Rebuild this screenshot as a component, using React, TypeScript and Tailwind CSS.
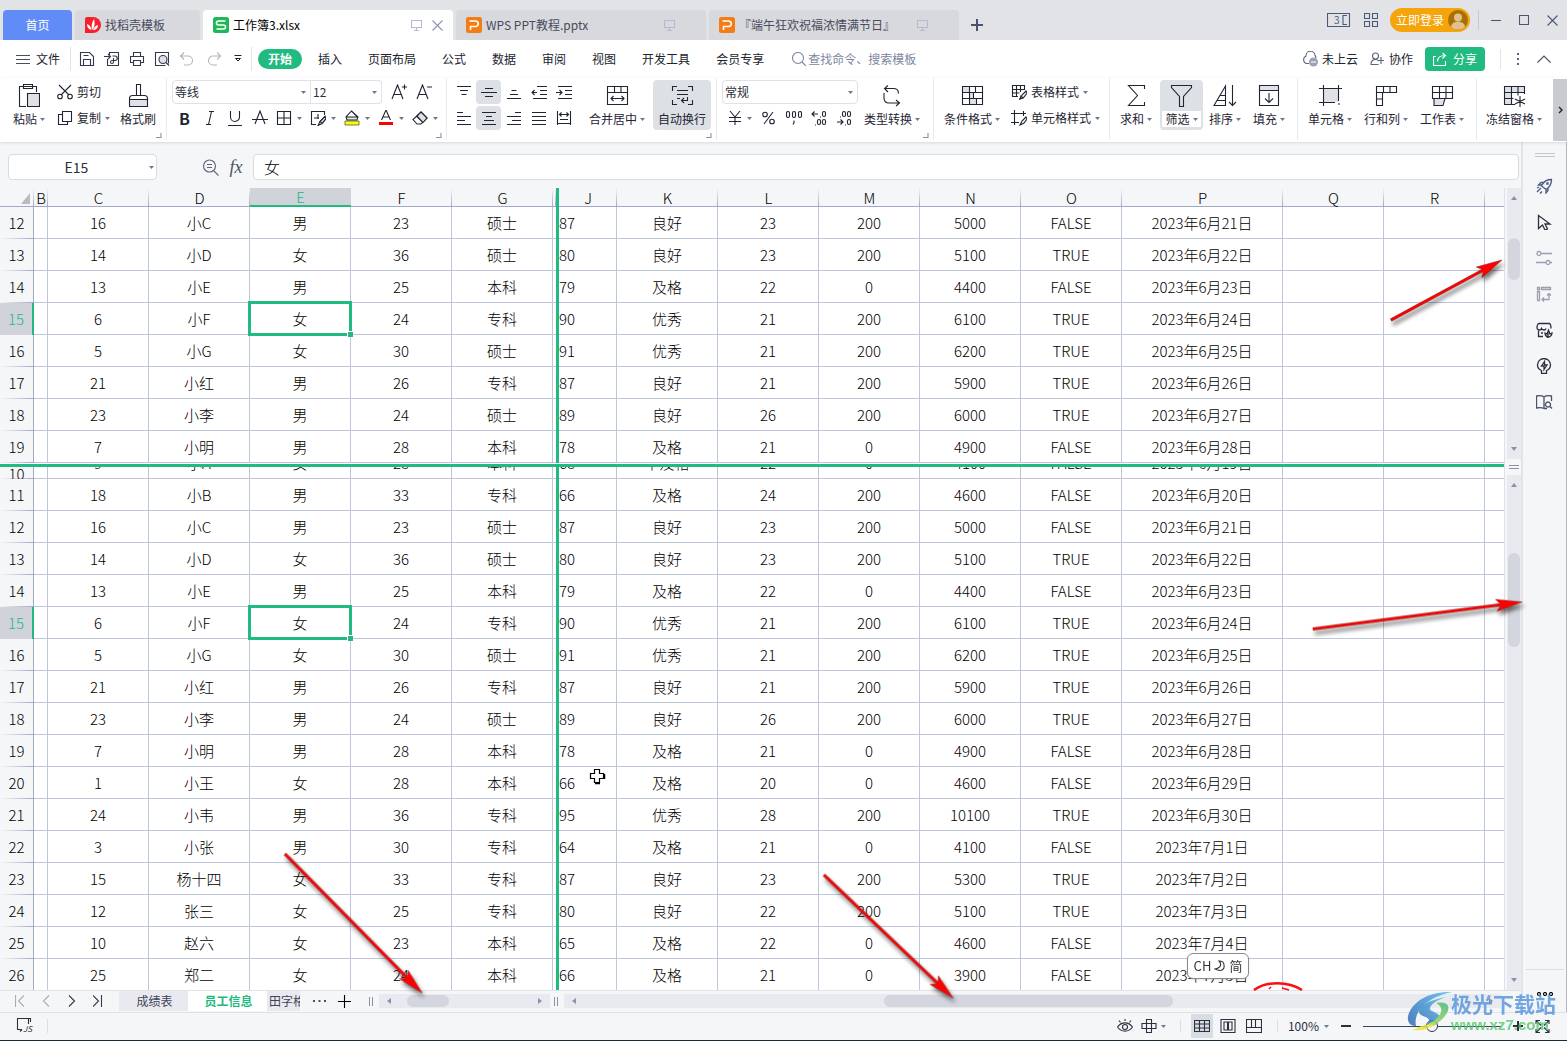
import React from 'react';

type IconProps = {
    d: string;
    w?: number;
    h?: number;
    fill?: string;
    className?: string;
    sw?: number;
    children?: React.ReactNode;
};

// Line icon drawn on its own pixel grid. `fill` is a second path shown as a pale area.
const Icon: React.FC<IconProps> = ({ d, w = 16, h = w, fill, className = '', sw = 1.1, children }) => (
    <svg width={w} height={h} viewBox={`0 0 ${w} ${h}`} fill="none" stroke="currentColor" strokeWidth={sw} className={`shrink-0 ${className}`} aria-hidden="true">
        {fill && <path d={fill} fill="#dfe1e6" stroke="none" />}
        <path d={d} />
        {children}
    </svg>
);

const Caret: React.FC<{ className?: string }> = ({ className = '' }) => (
    <svg width="5" height="3" viewBox="0 0 5 3" className={`shrink-0 text-[#6f7891] ${className}`} aria-hidden="true">
        <path d="M0 0h5L2.5 3z" fill="currentColor" />
    </svg>
);

const icons = {
    save: 'M1.5 1.5h9l4 4v9h-13zM4.5 14.5v-6h7v6M4.5 4.5h5',
    pdf: 'M5.500 4V1.500h9v13h-11V8M0 5.500h6.500M4 3l2.500 2.500L4 8M8.500 5h2.500a2 2 0 0 1 0 4.500h-3a1.500 1.500 0 1 0 1.500 1.500V7',
    print: 'M4.5 5.500v-4h7v4M4.500 11.500h-3v-6h13v6h-3M4.500 9.500h7v5h-7z',
    preview: 'M11.500 14.500h-10v-13h13v11M12 11.500l3 3',
    undo: 'M5 1.500L1.500 5L5 8.500M1.500 5h7.500a4.500 4.500 0 0 1 0 9H5',
    redo: 'M11 1.500L14.500 5L11 8.500M14.500 5H7a4.500 4.500 0 0 0 0 9h4',
    top: 'M1 2.500h14M4 6.500h8M5.500 10.500h5',
    middle: 'M4 4.500h8M0 8.500h16M4 12.500h8',
    bottom: 'M5.500 6.500h5M4 10.500h8M1 14.500h14',
    outdent: 'M6 2.500h10M9 6.500h7M9 10.500h7M2 14.500h14M1 8.500h5M3.500 6L1 8.500L3.500 11',
    indent: 'M2 2.500h14M9 6.500h7M9 10.500h7M2 14.500h14M0 8.500h6M3.500 6L6 8.500L3.500 11',
    left: 'M1 2.500h6M1 6.500h14M1 10.500h8M1 14.500h14',
    center: 'M1 2.500h14M5 6.500h6M3 10.500h10M1 14.500h14',
    right: 'M9 2.500h6M1 6.500h14M6 10.500h9M1 14.500h14',
    justify: 'M1 2.500h14M1 6.500h14M1 10.500h14M1 14.500h14',
    spread: 'M1.500 1v14M14.500 1v14M4 4.500h8M5.500 2.500L3.500 4.500L5.500 6.500M10.500 2.500L12.500 4.500L10.500 6.500M4 9.500h8M1 13.500h14',
};

const WpsLogo: React.FC<{ kind: 'sheet' | 'slide' | 'docer' }> = ({ kind }) => {
    if (kind === 'docer') {
        return (
            <svg width="16" height="16" viewBox="0 0 16 16" className="shrink-0" aria-hidden="true">
                <path d="M0 2a2 2 0 0 1 2-2h6a8 8 0 0 1 0 16H0z" fill="#f5222d" />
                <path d="M7 13C6 9 7 5 9 2c1 4 1 8-2 11zM6.500 13C3 12 2 9.500 2 7c3 1 4 3 4.500 6zM8 13c1-3 3-4.500 5-5 0 3-2 5-5 5z" fill="#fff" />
            </svg>
        );
    }
    const sheet = kind === 'sheet';
    return (
        <svg width="16" height="16" viewBox="0 0 16 16" className="shrink-0" aria-hidden="true">
            <rect width="16" height="16" rx="2.500" fill={sheet ? '#1fb858' : '#f57c14'} />
            <path d={sheet ? 'M12.500 4H5.500a1.700 1.700 0 0 0 0 4h5a1.700 1.700 0 0 1 0 4H3.500' : 'M4.500 13V9.500H10a2.800 2.800 0 0 0 0-5.500H3.500'} stroke="#fff" strokeWidth="1.600" fill="none" />
        </svg>
    );
};

const Monitor = () => <Icon d="M.5 1.500h10v7h-10zM5.500 8.500v3M3 11.500h5" w={11} h={12} className="text-[#b5bad2]" />;

const TitleBar = () => (
    <header className="flex h-10 items-end bg-[#e2e3e7] pl-[3px] pr-[9px]">
        <button className="h-[30px] w-[69px] shrink-0 rounded-t bg-[#618cf8] text-white">首页</button>
        <button className="ml-[3px] flex h-[30px] w-[125px] shrink-0 items-center gap-1 rounded-t bg-[#d8d9dd] pl-[10px] text-[#474b5c]">
            <WpsLogo kind="docer" />
            找稻壳模板
        </button>
        <div className="ml-[3px] flex h-[30px] w-[250px] shrink-0 items-center gap-1 rounded-t bg-white pl-[10px] pr-[10px] text-black">
            <WpsLogo kind="sheet" />
            <span className="flex-1">工作簿3.xlsx</span>
            <Monitor />
            <button aria-label="关闭标签" className="ml-[6px]">
                <Icon d="M.5.5l10 10M10.500.5l-10 10" w={11} className="text-[#8d94b0]" />
            </button>
        </div>
        <div className="ml-[3px] flex h-[30px] w-[250px] shrink-0 items-center gap-1 rounded-t bg-[#d8d9dd] pl-[10px] pr-[31px] text-[#474b5c]">
            <WpsLogo kind="slide" />
            <span className="flex-1">WPS PPT教程.pptx</span>
            <Monitor />
        </div>
        <div className="ml-[3px] flex h-[30px] w-[250px] shrink-0 items-center gap-1 rounded-t bg-[#d8d9dd] pl-[10px] pr-[31px] text-[#474b5c]">
            <WpsLogo kind="slide" />
            <span className="flex-1 whitespace-nowrap">『端午狂欢祝福浓情满节日』</span>
            <Monitor />
        </div>
        <button aria-label="新建标签" className="ml-3 flex h-[30px] items-center">
            <Icon d="M6 0v12M0 6h12" w={12} sw={2} className="text-[#4a536f]" />
        </button>
        <div className="flex h-10 flex-1 items-center justify-end text-[#4a5878]">
            <button aria-label="窗口数">
                <Icon d="M.5.5h22v13h-22zM20 2.500h-4v9h4" w={24} h={14}>
                    <text x="7" y="11" fontSize="10" fill="currentColor" stroke="none">3</text>
                </Icon>
            </button>
            <button aria-label="应用" className="ml-[13px]">
                <Icon d="M.5.5h5v5h-5zM8.500.5h5v5h-5zM.5 8.500h5v5h-5zM8.500 8.500h5v5h-5z" w={14} />
            </button>
            <button className="ml-3 flex h-6 items-center gap-1 rounded-full bg-[#f5a40c] pl-[6px] pr-[2px] text-white">
                立即登录
                <svg width="20" height="20" viewBox="0 0 20 20" aria-hidden="true">
                    <circle cx="10" cy="10" r="10" fill="#a96f05" />
                    <circle cx="10" cy="7.500" r="4" fill="#e0c08b" />
                    <path d="M3 17a7 5.500 0 0 1 14 0a10 10 0 0 1-14 0z" fill="#e0c08b" />
                </svg>
            </button>
            <span className="ml-2 h-5 w-px bg-[#c6c8d0]" />
            <button aria-label="最小化" className="ml-3">
                <Icon d="M0 5.500h10" w={10} />
            </button>
            <button aria-label="最大化" className="ml-[18px]">
                <Icon d="M.5.5h9v9h-9z" w={10} />
            </button>
            <button aria-label="关闭" className="ml-[18px]">
                <Icon d="M.5.5l10 10M10.500.5l-10 10" w={11} />
            </button>
        </div>
    </header>
);

const menus = ['插入', '页面布局', '公式', '数据', '审阅', '视图', '开发工具', '会员专享'];

const MenuBar = () => (
    <nav className="flex h-[38px] items-center bg-white pl-4 pr-4 text-[#20242e]">
        <button className="flex items-center gap-[6px]">
            <Icon d="M0 1.500h14M0 5.500h14M0 9.500h14" w={14} h={11} className="text-[#4a4f5e]" />
            文件
        </button>
        <span className="ml-[10px] h-6 w-px bg-[#e2e3e8]" />
        <div className="ml-2 flex items-center gap-[9px] text-[#333a4b]">
            <button aria-label="保存"><Icon d={icons.save} /></button>
            <button aria-label="输出为PDF"><Icon d={icons.pdf} /></button>
            <button aria-label="打印"><Icon d={icons.print} /></button>
            <button aria-label="打印预览"><Icon d={icons.preview}><circle cx="9" cy="8.500" r="4" fill="#dfe1e6" /></Icon></button>
            <button aria-label="撤销" className="text-[#b3b5bb]"><Icon d={icons.undo} /></button>
            <button aria-label="恢复" className="ml-[2px] text-[#b3b5bb]"><Icon d={icons.redo} /></button>
        </div>
        <button aria-label="更多快捷命令" className="ml-3">
            <Icon d="M.5 .5h7M1.500 3.500h5L4 6z" w={8} h={8} sw={1} />
        </button>
        <span className="ml-[9px] h-6 w-px bg-[#e2e3e8]" />
        <button className="ml-[6px] h-5 w-11 rounded-full bg-[#21ba80] font-bold text-white">开始</button>
        <div className="ml-4 flex gap-[26px]">
            {menus.map(m => (
                <button key={m} className="whitespace-nowrap">{m}</button>
            ))}
        </div>
        <label className="ml-7 flex items-center gap-[2px] text-[#7d86a0]">
            <Icon d="M10 10l4 4" w={14}><circle cx="6" cy="6" r="5.500" /></Icon>
            <input aria-label="查找命令、搜索模板" placeholder="查找命令、搜索模板" className="w-32 bg-transparent outline-none placeholder:text-[#7d86a0]" />
        </label>
        <div className="flex flex-1 items-center justify-end">
            <button className="flex items-center gap-1">
                <Icon d="M7 12.500H4.500a4 4 0 0 1-.5-7.500a4.500 4.500 0 0 1 9-.5c.5.500 1 1.500 1 2.500" w={16} className="text-[#5b647d]">
                    <circle cx="11.500" cy="11" r="4.500" fill="#9ca1b8" stroke="none" />
                    <path d="M9 11h5" stroke="#fff" />
                </Icon>
                未上云
            </button>
            <button className="ml-3 flex items-center gap-[5px]">
                <Icon d="M1 12.500c0-4 2-5 4.500-5c1.500 0 2.500.5 3 1.500M.5 12.500h8M11 5v7M7.500 8.500h7" w={14} className="text-[#5b647d]">
                    <circle cx="5.500" cy="4" r="3" />
                </Icon>
                协作
            </button>
            <button className="ml-3 flex h-6 w-[60px] items-center justify-center gap-[6px] rounded bg-[#21ba80] text-white">
                <Icon d="M3 4.500H.5v9h12V9M4.500 9.500c0-4 3-6 8-6M9.500 1L12.500 3.500L9.500 6.500" w={14} />
                分享
            </button>
            <span className="ml-[15px] h-5 w-px bg-[#e2e3e8]" />
            <button aria-label="更多" className="ml-4">
                <svg width="2" height="12" viewBox="0 0 2 12" fill="#5b647d" aria-hidden="true"><path d="M0 0h2v2H0zM0 5h2v2H0zM0 10h2v2H0z" /></svg>
            </button>
            <button aria-label="收起功能区" className="ml-[18px]">
                <Icon d="M.5 7.500L7 1l6.500 6.500" w={14} h={8} className="text-[#4a4f5e]" />
            </button>
        </div>
    </nav>
);

const Group: React.FC<{ className?: string; corner?: boolean; children: React.ReactNode }> = ({ className = '', corner, children }) => (
    <div className={`relative flex h-[62px] shrink-0 border-r border-[#e9eaee] pt-[2px] ${className}`}>
        {children}
        {corner && <Icon d="M5 0v4.500H0" w={6} className="absolute bottom-px right-1 text-[#8b92a6]" />}
    </div>
);

const Big: React.FC<{ label: string; className?: string; caret?: boolean; children: React.ReactNode }> = ({ label, className = '', caret = true, children }) => (
    <button className={`flex h-[50px] shrink-0 flex-col items-center whitespace-nowrap ${className}`}>
        <span className="flex h-[31px] items-center">{children}</span>
        <span className="flex items-center gap-[3px]">
            {label}
            {caret && <Caret />}
        </span>
    </button>
);

const Small: React.FC<{ label: string; on?: boolean; className?: string; children: React.ReactNode }> = ({ label, on, className = 'w-[25px]', children }) => (
    <button aria-label={label} className={`flex h-6 items-center justify-center gap-[5px] rounded-sm ${on ? 'bg-[#dde1e6]' : ''} ${className}`}>
        {children}
    </button>
);

const Dropdown: React.FC<{ label: string; value: string; className: string }> = ({ label, value, className }) => (
    <div className={`relative flex h-6 items-center border border-[#e0e1e6] ${className}`}>
        <select aria-label={label} className="h-full w-full appearance-none bg-transparent pl-[2px] text-[#2b303d] outline-none">
            <option>{value}</option>
        </select>
        <Caret className="pointer-events-none absolute right-1" />
    </div>
);

const Ribbon = () => (
    <div className="relative z-10 flex h-16 items-start overflow-hidden bg-white text-[#1f2533] shadow-[0_1px_3px_rgba(0,0,0,0.12)]">
        <Group corner className="w-[167px] pl-[6px]">
            <Big label="粘贴" className="w-[46px]">
                <Icon d="M8 23.500H1.500v-20h17V9M5.500 5.500v-4h9v4z" w={22} h={26}>
                    <path d="M9.500 10.500h12v13h-12z" fill="#dfe1e6" />
                </Icon>
            </Big>
            <div className="ml-[5px] flex w-[59px] flex-col gap-[2px]">
                <button className="flex h-6 items-center gap-1">
                    <Icon d="M2 1l10 10M14 1L4 11">
                        <circle cx="3" cy="12.500" r="2.300" />
                        <circle cx="13" cy="12.500" r="2.300" />
                    </Icon>
                    剪切
                </button>
                <button className="flex h-6 items-center gap-1">
                    <Icon d="M5.500 1.500h9v10h-9zM5.500 4.500h-4v10h9v-3" />
                    <span className="whitespace-nowrap">复制</span>
                    <Caret />
                </button>
            </div>
            <Big label="格式刷" caret={false} className="w-11">
                <Icon d="M8.500 12V1.500h4V12M1.500 23.500v-8c0-2 1-3 3-3h12c2 0 3 1 3 3v8zM1.500 16.500h18" w={21} h={25} fill="M2 17h17v6H2z" />
            </Big>
        </Group>

        <Group corner className="w-[280px] flex-col gap-[2px] pl-[5px]">
            <div className="flex h-6">
                <Dropdown label="字体" value="等线" className="w-[139px] rounded-l-sm" />
                <Dropdown label="字号" value="12" className="w-[71px] rounded-r-sm border-l-0" />
                <Small label="增大字号" className="ml-1 w-[25px]">
                    <Icon d="M1 15L6.500 1L12 15M3 10.500h7M11 3h5M13.500.5v5" w={16} />
                </Small>
                <Small label="减小字号">
                    <Icon d="M1 15L6.500 1L12 15M3 10.500h7M11 3h5" w={16} />
                </Small>
            </div>
            <div className="flex h-6 items-center">
                <Small label="加粗"><span className="text-base font-bold leading-4">B</span></Small>
                <Small label="倾斜"><Icon d="M6 1.500h5M3 14.500h5M8.500 1.500l-3 13" w={14} h={16} /></Small>
                <Small label="下划线"><Icon d="M3.500 1v6a4.500 4.500 0 0 0 9 0V1M1 15.500h14" /></Small>
                <Small label="删除线"><Icon d="M3 14L8 1l5 13M0 9.500h16" /></Small>
                <Small label="边框" className="w-[34px]">
                    <Icon d="M1.500 1.500h13v13h-13zM8 1.500v13M1.500 8h13" />
                    <Caret />
                </Small>
                <Small label="绘图边框" className="w-[34px]">
                    <Icon d="M14.500 5v-3.500h-13v13H6M4 8h5M8 4v5M15 6.500l-5 5l-2 4l4-2l4-5z"><path d="M15 6.500l-5 5l2 2l4-5z" fill="#dfe1e6" /></Icon>
                    <Caret />
                </Small>
                <Small label="填充颜色" className="w-[34px]">
                    <Icon d="M7.500 1L2 7l1 3h10l1-3zM7.500 1l6 6M2 7h12" fill="M3 7h10v3H3z">
                        <path d="M1 11h14v4H1z" fill="#ffff00" strokeWidth=".6" />
                    </Icon>
                    <Caret />
                </Small>
                <Small label="字体颜色" className="w-[34px]">
                    <Icon d="M3.500 10L8 0l4.500 10M5 7h6"><path d="M1 12h14v3H1z" fill="#ff0000" stroke="none" /></Icon>
                    <Caret />
                </Small>
                <Small label="清除" className="w-[34px]">
                    <Icon d="M9 2l6 6l-6 6H5L1 9.500zM4.500 6l6 6"><path d="M9 2l6 6l-4 4.500l-6-6.500z" fill="#dfe1e6" /></Icon>
                    <Caret />
                </Small>
            </div>
        </Group>

        <Group corner className="w-[270px] pl-1">
            <div className="flex w-[126px] flex-col gap-[2px]">
                <div className="flex">
                    <Small label="顶端对齐"><Icon d={icons.top} /></Small>
                    <Small label="垂直居中" on><Icon d={icons.middle} /></Small>
                    <Small label="底端对齐"><Icon d={icons.bottom} /></Small>
                    <Small label="减少缩进"><Icon d={icons.outdent} /></Small>
                    <Small label="增加缩进"><Icon d={icons.indent} /></Small>
                </div>
                <div className="flex">
                    <Small label="左对齐"><Icon d={icons.left} /></Small>
                    <Small label="水平居中" on><Icon d={icons.center} /></Small>
                    <Small label="右对齐"><Icon d={icons.right} /></Small>
                    <Small label="两端对齐"><Icon d={icons.justify} /></Small>
                    <Small label="分散对齐"><Icon d={icons.spread} /></Small>
                </div>
            </div>
            <Big label="合并居中" className="ml-2 w-[64px]">
                <Icon d="M1.500 1.500h20v18h-20zM1.500 7.500h20M8.500 1.500v6M15 1.500v6M5 13.500h13M7.500 11L5 13.500L7.500 16M15.500 11l2.500 2.500L15.500 16" w={23} h={21} />
            </Big>
            <Big label="自动换行" caret={false} className="ml-1 w-[58px] rounded-sm bg-[#dde1e6]">
                <Icon d="M6 1.500H1.500V6M17 1.500h4.500V6M6 19.500H1.500V15M17 19.500h4.500V15M6 5.500h11M6 9.500h11M6 13.500h3M16.500 12v3.500h-6M13 13l-2.500 2.500L13 18" w={23} h={21} />
            </Big>
        </Group>

        <Group corner className="w-[217px] pl-[5px]">
            <div className="flex w-[136px] flex-col gap-[2px]">
                <Dropdown label="数字格式" value="常规" className="rounded-sm" />
                <div className="flex">
                    <Small label="货币" className="w-[34px]"><Icon d="M3 1l5 6l5-6M2 7.500h12M2 11.500h12M8 7v8" w={15} h={16} /><Caret /></Small>
                    <Small label="百分比"><Icon d="M12 2L3 14" w={15} h={16}><circle cx="4" cy="4.500" r="2.300" /><circle cx="11" cy="11.500" r="2.300" /></Icon></Small>
                    <Small label="千位分隔">
                        <Icon d="M8 10.500v2l-1 2">
                            <rect x="0.500" y="1.500" width="3" height="6" rx="1.500" /><rect x="6.500" y="1.500" width="3" height="6" rx="1.500" /><rect x="12.500" y="1.500" width="3" height="6" rx="1.500" />
                        </Icon>
                    </Small>
                    <Small label="增加小数位">
                        <Icon d="M1 4h6M3.500 1.500L1 4l2.500 2.500M9 7h1M4 15h1">
                            <rect x="11.500" y="1.500" width="3" height="5" rx="1.500" /><rect x="6.500" y="9.500" width="3" height="5" rx="1.500" /><rect x="11.500" y="9.500" width="3" height="5" rx="1.500" />
                        </Icon>
                    </Small>
                    <Small label="减少小数位">
                        <Icon d="M1 12h6M4.500 9.500L7 12l-2.500 2.500M4 7h1M9 15h1">
                            <rect x="6.500" y="1.500" width="3" height="5" rx="1.500" /><rect x="11.500" y="1.500" width="3" height="5" rx="1.500" /><rect x="11.500" y="9.500" width="3" height="5" rx="1.500" />
                        </Icon>
                    </Small>
                </div>
            </div>
            <Big label="类型转换" className="ml-[2px] w-[64px]">
                <Icon d="M6 1.500L2.500 4.500L6 8M2.500 4.500h9c3 0 5 1 5 5M2 9v5c0 3 2 5 5 5h10.500M14 16l3.500 3L14 22" w={20} h={24} />
            </Big>
        </Group>

        <Group className="w-[176px] pl-[9px]">
            <Big label="条件格式" className="w-[58px]">
                <Icon d="M1.500 1.500h20v18h-20zM1.500 7.500h20M1.500 13.500h20M8.500 1.500v18M14.500 1.500v6M12.500 7.500v6M15.500 13.500v6" w={23} h={21} fill="M2 2h6v5H2zM9 8h3v5H9zM9 14h6v5H9z" />
            </Big>
            <div className="ml-[10px] flex flex-col gap-[2px]">
                <button className="flex h-6 items-center gap-1 whitespace-nowrap">
                    <Icon d="M13.500 6V1.500h-12v11H7M1.500 5.500h12M1.500 9h7M5.500 1.500v11M9.500 1.500V8M15 7l-4 4l-2 4l4-2l3-4z"><path d="M9 15l1-3l2 2z" fill="#dfe1e6" /></Icon>
                    表格样式
                    <Caret />
                </button>
                <button className="flex h-6 items-center gap-1 whitespace-nowrap">
                    <Icon d="M3.500 0v15M0 3.500h15M12.500 1v5M0 12.500h8M15 7l-4 4l-2 4l4-2l3-4z" />
                    单元格样式
                    <Caret />
                </button>
            </div>
        </Group>

        <Group className="w-[188px] pl-1">
            <Big label="求和" className="w-[44px]">
                <Icon d="M17.500 5V1.500h-16l9 10l-9 10h16V18" w={19} h={23} />
            </Big>
            <button className="ml-[2px] flex h-[50px] w-[43px] flex-col items-center rounded-sm bg-[#dde1e6]">
                <span className="flex h-[31px] items-center"><Icon d="M1.500 1.500h20v2l-8 9v10h-4v-10l-8-9z" w={23} h={24} /></span>
                <span className="flex w-[39px] items-center justify-center gap-[3px] bg-white">筛选<Caret /></span>
            </button>
            <Big label="排序" className="w-[44px]">
                <Icon d="M1 21.500L12.500 2v19.500zM7 11.500h5.500M4 16.500h8.500M19.500 1v20M16 18l3.500 3.500L23 18" w={24} h={23} />
            </Big>
            <Big label="填充" className="w-[44px]">
                <Icon d="M1.500 1.500h19v20h-19zM1.500 6.500h19M11 9v9M7 14.500l4 4l4-4" w={22} h={23} fill="M2 2h18v4H2z" />
            </Big>
        </Group>

        <Group className="w-[179px] pl-1">
            <Big label="单元格" className="w-[56px]">
                <Icon d="M4.500 0v21M0 3.500h23M19.500 0v16M0 17.500h16M19 19h2" w={23} h={21} fill="M5 4h14v13H5z" />
            </Big>
            <Big label="行和列" className="w-[56px]">
                <Icon d="M1.500 1.500h20v6h-20zM8.500 1.500v6M15 1.500v6M1.500 7.500v13h6v-13M1.500 14h6" w={23} h={22} />
            </Big>
            <Big label="工作表" className="w-[56px]">
                <Icon d="M1.500 1.500h20v12h-20zM1.500 7.500h20M8.500 1.500v12M15 1.500v12M3 13.500v7h9l2-7" w={23} h={22} fill="M3 14h10l-2 6H3z" />
            </Big>
        </Group>

        <div className="flex flex-1 pt-[2px]">
            <Big label="冻结窗格" className="ml-[7px] w-[60px]">
                <Icon d="M21.500 9V1.500h-20v18H12M1.500 7.500h20M1.500 13.500h9M8.500 1.500v18M15 1.500v9M17 11v11M12 14l10 5M22 14l-10 5" w={23} h={22} fill="M2 2h19v5H8v12H2z" />
            </Big>
        </div>
        <button aria-label="更多功能" className="mt-px flex h-[62px] w-[14px] shrink-0 items-center justify-center bg-[#c9cad0]">
            <Icon d="M1 1l3 3L1 7" w={5} h={8} sw={1.400} />
        </button>
    </div>
);

const FormulaBar = () => (
    <div className="flex h-[46px] items-center bg-[#f5f6f8] pl-2 pr-[2px] pt-1 text-[#2b303d]">
        <div className="relative flex h-[26px] w-[149px] items-center rounded-sm border border-[#dadbe0] bg-white">
            <input aria-label="名称框" defaultValue="E15" className="w-full bg-transparent pr-3 text-center text-sm outline-none" />
            <Caret className="absolute right-[2px]" />
        </div>
        <button aria-label="浏览公式结果" className="ml-[45px]">
            <Icon d="M12 12l4.500 4.500M5 5.500h5M5 8.500h5" w={17} className="text-[#5b647d]"><circle cx="7.500" cy="7" r="6" /></Icon>
        </button>
        <button aria-label="插入函数" className="ml-2 w-[18px] font-['Liberation_Serif','DejaVu_Serif',serif] text-lg italic leading-6 text-[#4a5268]">fx</button>
        <input aria-label="编辑栏" defaultValue="女" className="ml-2 h-[26px] min-w-0 flex-1 rounded-sm border border-[#dadbe0] bg-white px-[10px] text-base font-light text-black outline-none" />
    </div>
);

type Row = { n: number; left: string[]; right: string[] };

const row = (n: number, left: string, right: string): Row => ({ n, left: left.split(' '), right: right.split(' ') });

const rows: Row[] = [
    row(10, '9 小A 女 28 本科', '68 不及格 22 0 4100 FALSE 2023年6月19日'),
    row(11, '18 小B 男 33 专科', '66 及格 24 200 4600 FALSE 2023年6月20日'),
    row(12, '16 小C 男 23 硕士', '87 良好 23 200 5000 FALSE 2023年6月21日'),
    row(13, '14 小D 女 36 硕士', '80 良好 23 200 5100 TRUE 2023年6月22日'),
    row(14, '13 小E 男 25 本科', '79 及格 22 0 4400 FALSE 2023年6月23日'),
    row(15, '6 小F 女 24 专科', '90 优秀 21 200 6100 TRUE 2023年6月24日'),
    row(16, '5 小G 女 30 硕士', '91 优秀 21 200 6200 TRUE 2023年6月25日'),
    row(17, '21 小红 男 26 专科', '87 良好 21 200 5900 TRUE 2023年6月26日'),
    row(18, '23 小李 男 24 硕士', '89 良好 26 200 6000 TRUE 2023年6月27日'),
    row(19, '7 小明 男 28 本科', '78 及格 21 0 4900 FALSE 2023年6月28日'),
    row(20, '1 小王 女 28 本科', '66 及格 20 0 4600 FALSE 2023年6月29日'),
    row(21, '24 小韦 男 36 专科', '95 优秀 28 200 10100 TRUE 2023年6月30日'),
    row(22, '3 小张 男 30 专科', '64 及格 21 0 4100 FALSE 2023年7月1日'),
    row(23, '15 杨十四 女 33 专科', '87 良好 23 200 5300 TRUE 2023年7月2日'),
    row(24, '12 张三 女 25 专科', '80 良好 22 200 5100 TRUE 2023年7月3日'),
    row(25, '10 赵六 女 23 本科', '65 及格 22 0 4600 FALSE 2023年7月4日'),
    row(26, '25 郑二 女 24 本科', '66 及格 21 0 3900 FALSE 2023年7月5日'),
];

const cell = 'relative h-8 border-b border-r border-[#c0c6da] bg-white p-0 text-center font-light whitespace-nowrap';
const colHead = 'h-[19px] border-b border-[#a3aac8] bg-[#f5f6f8] bg-[linear-gradient(to_bottom,transparent,#a3aac8)] bg-[length:1px_100%] bg-right bg-no-repeat p-0 pt-[2px] font-light leading-4';

const LeftTable: React.FC<{ data: Row[]; head?: boolean }> = ({ data, head }) => (
    <table className="w-[556px] table-fixed border-separate border-spacing-0">
        <colgroup>
            <col className="w-[34px]" />
            <col className="w-[14px]" />
            <col span={5} className="w-[101px]" />
            <col className="w-[3px]" />
        </colgroup>
        {head && (
            <thead>
                <tr>
                    <th aria-label="全选" className={colHead}>
                        <svg width="9" height="11" viewBox="0 0 9 11" className="ml-auto mr-1" aria-hidden="true"><path d="M9 0v11H0z" fill="#b9bbc1" /></svg>
                    </th>
                    {['B', 'C', 'D', 'E', 'F', 'G', ''].map(c => (
                        <th key={c} className={c === 'E' ? 'border-b-2 border-[#21ba80] bg-[#d0d3da] p-0 pt-px font-light leading-4 text-[#21ba80]' : colHead}>{c}</th>
                    ))}
                </tr>
            </thead>
        )}
        <tbody>
            {data.map(r => (
                <tr key={r.n}>
                    <th
                        scope="row"
                        className={
                            r.n === 15
                                ? 'h-8 border-r-2 border-[#21ba80] bg-[#d0d3da] p-0 font-light text-[#21ba80]'
                                : 'h-8 border-r border-[#a3aac8] bg-[#f5f6f8] bg-[linear-gradient(to_right,transparent,#a3aac8)] bg-[length:100%_1px] bg-bottom bg-no-repeat p-0 font-light'
                        }
                    >
                        {r.n === 10 ? <div className="mt-5 h-[11px] overflow-hidden leading-3">10</div> : r.n}
                    </th>
                    <td className={cell} />
                    {r.left.map((v, i) => (
                        <td key={i} className={cell}>
                            {v}
                            {r.n === 15 && i === 2 && (
                                <span className="absolute -inset-[2px] z-10 border-[3px] border-[#21ba80]">
                                    <span className="absolute -bottom-1 -right-1 size-[6px] border-l border-t border-white bg-[#21ba80]" />
                                </span>
                            )}
                        </td>
                    ))}
                    <td className="border-b border-[#c0c6da] bg-white p-0" />
                </tr>
            ))}
        </tbody>
    </table>
);

const RightTable: React.FC<{ data: Row[]; head?: boolean }> = ({ data, head }) => (
    <table className="w-full table-fixed border-separate border-spacing-0">
        <colgroup>
            <col className="w-[58px]" />
            <col span={5} className="w-[101px]" />
            <col className="w-[161px]" />
            <col span={2} className="w-[101px]" />
            <col />
        </colgroup>
        {head && (
            <thead>
                <tr>
                    {['J', 'K', 'L', 'M', 'N', 'O', 'P', 'Q', 'R'].map(c => (
                        <th key={c} className={colHead}>{c}</th>
                    ))}
                    <th className="border-b border-[#a3aac8] bg-[#f5f6f8] p-0" />
                </tr>
            </thead>
        )}
        <tbody>
            {data.map(r => (
                <tr key={r.n}>
                    {r.right.map((v, i) => (
                        <td key={i} className={cell}>{i === 0 ? <div className="text-left">{v}</div> : v}</td>
                    ))}
                    <td className={cell} />
                    <td className={cell} />
                    <td className="border-b border-[#c0c6da] bg-white p-0" />
                </tr>
            ))}
        </tbody>
    </table>
);

const Pane: React.FC<{ data: Row[]; head?: boolean }> = ({ data, head }) => (
    <div className="flex">
        <div className="w-[556px] shrink-0"><LeftTable data={data} head={head} /></div>
        <div className="w-[3px] shrink-0 bg-[#21ba80]" />
        <div className="min-w-0 flex-1"><RightTable data={data} head={head} /></div>
    </div>
);

const VScroll: React.FC<{ className: string; thumb: string }> = ({ className, thumb }) => (
    <div className={`flex flex-col items-center bg-[#e9eaef] py-2 ${className}`}>
        <svg width="6" height="4" viewBox="0 0 6 4" aria-hidden="true"><path d="M0 4h6L3 0z" fill="#8791ad" /></svg>
        <div className={`w-3 rounded-full bg-[#d3d6de] ${thumb}`} />
        <svg width="6" height="4" viewBox="0 0 6 4" className="mt-auto" aria-hidden="true"><path d="M0 0h6L3 4z" fill="#8791ad" /></svg>
    </div>
);

const Grid = () => (
    <div className="flex">
        <div className="min-w-0 flex-1 text-[15px] leading-5 text-black">
            <div className="h-[276px] bg-white"><Pane data={rows.slice(2, 10)} head /></div>
            <div className="relative z-10 h-[3px] bg-[#21ba80]" />
            <div className="h-[523px] overflow-hidden">
                {/* the lower pane is scrolled 20px into row 10 */}
                <div className="-mt-5"><Pane data={rows} /></div>
            </div>
        </div>
        <div className="flex w-[17px] shrink-0 flex-col border-l border-[#dfe1e8] bg-[#f5f6f8] pl-[2px]">
            <VScroll className="h-[271px]" thumb="mt-[38px] h-[42px]" />
            <div className="flex h-4 items-center justify-center">
                <span className="h-1 w-[10px] border-y border-[#8791ad]" />
            </div>
            <VScroll className="flex-1" thumb="mt-[66px] h-[94px]" />
        </div>
    </div>
);

const HArrow: React.FC<{ dir: 'l' | 'r'; className?: string }> = ({ dir, className = '' }) => (
    <svg width="4" height="6" viewBox="0 0 4 6" className={`shrink-0 ${className}`} aria-hidden="true">
        <path d={dir === 'l' ? 'M4 0v6L0 3z' : 'M0 0v6l4-3z'} fill="#8791ad" />
    </svg>
);

const Splitter = () => <span className="h-[9px] w-1 shrink-0 border-x border-[#8791ad]" />;

const SheetBar = () => (
    <div className="flex h-[22px] items-start border-t border-[#e0e2e8] bg-[#f5f6f8]">
        <div className="flex h-5 w-[119px] shrink-0 items-center gap-4 pl-[15px] text-[#333a4b]">
            <button aria-label="第一个工作表" className="text-[#a9acb5]"><Icon d="M.5 0v12M9 .5L3.500 6L9 11.500" w={10} h={12} /></button>
            <button aria-label="上一个工作表" className="text-[#a9acb5]"><Icon d="M8 .5L2.500 6L8 11.500" w={10} h={12} /></button>
            <button aria-label="下一个工作表"><Icon d="M2 .5L7.500 6L2 11.500" w={10} h={12} /></button>
            <button aria-label="最后一个工作表"><Icon d="M8.500 0v12M0 .5L5.500 6L0 11.500" w={10} h={12} /></button>
        </div>
        <button className="h-5 w-[69px] shrink-0 bg-[#e9eaef] pl-[2px] text-[#3e4457]">成绩表</button>
        <button className="h-5 w-[79px] shrink-0 bg-white pl-[2px] font-bold text-[#21ba80]">员工信息</button>
        <button className="h-5 w-[33px] shrink-0 overflow-hidden whitespace-nowrap bg-[#e9eaef] pl-[2px] text-left text-[#3e4457]">田字格</button>
        <button aria-label="更多工作表" className="ml-[13px] flex h-5 items-center">
            <svg width="13" height="2" viewBox="0 0 13 2" fill="#4a4f5e" aria-hidden="true"><path d="M0 0h2v2H0zM5.500 0h2v2h-2zM11 0h2v2h-2z" /></svg>
        </button>
        <button aria-label="新建工作表" className="ml-3 flex h-5 items-center"><Icon d="M6.500 0v13M0 6.500h13" w={13} /></button>
        <div className="flex h-5 min-w-0 flex-1 items-center">
            <span className="w-[18px] shrink-0" />
            <Splitter />
            <div className="ml-[6px] flex h-[14px] w-[171px] shrink-0 items-center bg-[#e9eaef] px-2">
                <HArrow dir="l" />
                <div className="ml-4 h-3 w-[42px] rounded-full bg-[#d3d6de]" />
                <HArrow dir="r" className="ml-auto" />
            </div>
            <span className="ml-1 flex"><Splitter /></span>
            <div className="ml-[6px] flex h-[14px] flex-1 items-center bg-[#e9eaef] px-2">
                <HArrow dir="l" />
                <div className="flex flex-1 justify-center pr-2">
                    <div className="h-3 w-[289px] rounded-full bg-[#d3d6de]" />
                </div>
                <HArrow dir="r" />
            </div>
            <span className="w-5 shrink-0" />
        </div>
    </div>
);

const sideTools = [
    { label: '快捷工具', tone: 'text-[#4a5a80]', d: 'M6 7c2-4 5-5.500 9.500-5.500C15.500 6 14 9 10 11.500L5 7.500zM6 7H2.500L5 4.500h3M10 11v4l2-2.500V9.500M1 10l2-1M1 14l4-4M4 15.500l2-2M11 5h1v1h-1z' },
    { label: '选择', tone: 'text-[#2b303d]', d: 'M2.500 1.500v13l4-3.500l2.500 5l2.500-1l-2.500-5h5z' },
    { label: '属性', tone: 'text-[#9aa0ae]', d: 'M5 3.500h11M0 12.500h10M14 12.500h2M3 1.500a2 2 0 1 0 .01 0M12 10.500a2 2 0 1 0 .01 0' },
    { label: '行列转换', tone: 'text-[#9aa0ae]', d: 'M1.500 1.500h2v2h-2zM5.500 1.500h9v2h-9zM1.500 5.500h2v9h-2zM6 13.500h7v-6M8 11.500l-2 2l2 2M11 9.500l2-2l2 2' },
    { label: '素材库', tone: 'text-[#2b303d]', d: 'M7 14.500H2.500V8M1 6.500c0-2 .5-5 2-5h10c1.500 0 2 3 2 5M1 6.500c1 2 4 2 4.500 0c1 2 4 2 4.500 0M12 15.500c-2-1-3-2.500-3-4.500l2 1l1.500-4l1.500 4l2-1c0 2-1 3.500-4 4.500v-5M5 11h2' },
    { label: '智能分析', tone: 'text-[#2b303d]', d: 'M5.500 12.500C3 11.500 1.500 9.500 1.500 7a6.500 6.500 0 0 1 13 0c0 2.500-1.500 4.500-4 5.500v3h-5zM8.500 3.500L5.500 8h2.500v3.500l3-4.500H8.500z' },
    { label: '帮助中心', tone: 'text-[#4a5268]', d: 'M8 3C6 1.500 3 1.500.5 2v12c3-.5 5.500-.5 7.500.5V3c2-1.500 5-1.500 7.500-1v5M8 14.500h3M12 8a2.500 2.500 0 1 0 .01 0M14 12.500l2 2' },
];

const SidePanel = () => (
    <aside className="flex w-[46px] shrink-0 flex-col items-center border-l-2 border-r border-l-[#e2e4eb] border-r-[#b4b6bb] bg-[#f5f6f8] pt-[11px]">
        <span className="h-1 w-5 border-y border-[#c5c7cd]" />
        <div className="mt-[21px] flex flex-col gap-5">
            {sideTools.map(t => (
                <button key={t.label} aria-label={t.label} className={t.tone}><Icon d={t.d} w={17} h={16} sw={1.300} /></button>
            ))}
        </div>
        <span className="mt-auto h-px w-[38px] bg-[#dcdee3]" />
        <button aria-label="更多工具" className="mb-4 mt-[22px]">
            <Icon d="M2 .5a1.500 1.500 0 1 0 .01 0M8 .5a1.500 1.500 0 1 0 .01 0M14 .5a1.500 1.500 0 1 0 .01 0" w={16} h={4} />
        </button>
    </aside>
);

const StatusBar = () => (
    <footer className="flex h-[29px] items-center border-b border-t border-b-[#1c2b38] border-t-[#e0e2e8] bg-[#f5f6f8] pb-px pl-4 pr-[17px] text-[#2b303d]">
        <button aria-label="JS宏">
            <Icon d="M6 12.500H1.500v-11h13V5M12.500 2v5M6 12.500l-2 2" w={18}>
                <text x="7" y="15" fontSize="8" fill="currentColor" stroke="none" fontStyle="italic">JS</text>
            </Icon>
        </button>
        <span className="ml-[13px] h-[14px] w-px bg-[#dcdee3]" />
        <div className="flex flex-1 items-center justify-end">
            <button aria-label="护眼模式"><Icon d="M.5 9c4-5.500 11-5.500 15 0c-4 5.500-11 5.500-15 0zM8 3V1M3.500 4.500L2 2.500M12.500 4.500L14 2.500"><circle cx="8" cy="9" r="2.500" /></Icon></button>
            <button aria-label="阅读模式" className="ml-2 flex items-center gap-1"><Icon d="M5.500 1.500h5v13h-5zM1 5.500h14v5h-14z" /><Caret /></button>
            <span className="ml-[14px] h-3 w-px bg-[#dcdee3]" />
            <button aria-label="普通视图" className="ml-[10px] flex h-6 w-[22px] items-center justify-center bg-[#d8dce3]"><Icon d="M.5 2.500h15v11h-15zM.5 6h15M.5 10h15M5.500 2.500v11M10.500 2.500v11" /></button>
            <button aria-label="页面视图" className="ml-[7px]"><Icon d="M1 1.500h14v13h-14zM4 4h3.500v8H4zM8.500 4H12v8H8.500z" /></button>
            <button aria-label="分页预览" className="ml-[10px]"><Icon d="M.5 1.500h15v13h-15zM.5 9.500h15M5.500 1.500v8M9.500 1.500v8" /></button>
            <span className="ml-[15px] h-3 w-px bg-[#dcdee3]" />
            <button className="ml-[10px] flex items-center gap-[5px]">100%<Caret /></button>
            <button aria-label="缩小" className="ml-3"><Icon d="M0 1h10" w={10} h={2} sw={2} /></button>
            <input
                type="range"
                aria-label="缩放"
                defaultValue={50}
                className="ml-3 h-px w-[138px] appearance-none bg-[#33465f] outline-none [&::-webkit-slider-thumb]:size-3 [&::-webkit-slider-thumb]:appearance-none [&::-webkit-slider-thumb]:rounded-full [&::-webkit-slider-thumb]:border [&::-webkit-slider-thumb]:border-[#333a4b] [&::-webkit-slider-thumb]:bg-[#f5f6f8]"
            />
            <button aria-label="放大" className="ml-3"><Icon d="M5 0v10M0 5h10" w={10} sw={2} /></button>
            <button aria-label="全屏" className="ml-3"><Icon d="M1 5V1.500h4M10 1.500h4V5M1 10v3.500h4M10 13.500h4V10M1 1.500l5 5M14 1.500l-5 5M1 13.500l5-5M14 13.500l-5-5" w={15} /></button>
        </div>
    </footer>
);

// Red pointer from (x1, y1) to its tip at (x2, y2)
const Pointer: React.FC<{ x1: number; y1: number; x2: number; y2: number }> = ({ x1, y1, x2, y2 }) => {
    const len = Math.hypot(x2 - x1, y2 - y1);
    const angle = (Math.atan2(y2 - y1, x2 - x1) * 180) / Math.PI;
    return (
        <g transform={`translate(${x1} ${y1}) rotate(${angle})`}>
            <path d={`M0-1.300H${len - 22}L${len - 26}-6L${len} 0L${len - 26} 6L${len - 22} 1.300H0z`} fill="#ff0000" stroke="#8d2525" strokeWidth=".5" strokeLinejoin="round" />
        </g>
    );
};

const Annotations = () => (
    <svg width="1567" height="1041" viewBox="0 0 1567 1041" className="pointer-events-none absolute left-0 top-0 z-20" aria-hidden="true">
        <defs>
            <filter id="drop" x="-10%" y="-10%" width="125%" height="130%" colorInterpolationFilters="sRGB">
                <feDropShadow dx="2" dy="4" stdDeviation="2" floodOpacity=".55" />
            </filter>
            <linearGradient id="swoosh" x1="0" y1="1" x2="1" y2="0">
                <stop offset="0" stopColor="#2b62ad" />
                <stop offset="1" stopColor="#55bdf0" />
            </linearGradient>
            <linearGradient id="leaf" x1="0" y1="1" x2="1" y2="0">
                <stop offset="0" stopColor="#e8e337" />
                <stop offset="1" stopColor="#38b878" />
            </linearGradient>
        </defs>
        <path d="M1254 990c12-9 34-9 48 0" stroke="#ff0c0c" strokeWidth="2.500" fill="none" />
        <path d="M1269 989l2-2M1282 988l7 2" stroke="#ff0c0c" strokeWidth="1.500" />
        <g filter="url(#drop)">
            <Pointer x1={1391} y1={320} x2={1502} y2={260} />
            <Pointer x1={1313} y1={629} x2={1522} y2={602} />
            <Pointer x1={285} y1={854} x2={422} y2={993} />
            <Pointer x1={824} y1={875} x2={953} y2={998} />
        </g>
        <path d="M594.500 769.500h5v4h4v5h-4v4h-5v-4h-4v-5h4z" fill="#fff" stroke="#000" strokeWidth="1.200" />
        <path d="M600 783.500h-5M604.500 774v5" stroke="#000" strokeWidth="1.500" />
        <g opacity=".82">
            <path d="M1452 992c-22-1-40 9-44 24c-1 6 2 10 8 10c-3-15 12-29 36-34z" fill="url(#swoosh)" />
            <path d="M1446 997c-16 3-27 8-27 15c0 5 11 4 10 9c0 4-6 6-12 6c12 2 22-2 23-9c0-6-11-6-10-10c1-4 7-8 16-11z" fill="url(#swoosh)" />
            <path d="M1436 1003c11-2 15 3 11 10c-6 10-17 16-33 17c15-5 25-11 27-18c1-4-1-7-5-9z" fill="url(#leaf)" />
            <path d="M1413 1030c8-5 14-6 21-5c-5 4-12 6-21 5z" fill="#e8e337" />
        </g>
    </svg>
);

const App: React.FC = () => (
    <div className="relative flex min-h-screen w-full flex-col overflow-hidden bg-[#f5f6f8] font-['Noto_Sans_CJK_SC',sans-serif] text-xs">
        <TitleBar />
        <MenuBar />
        <Ribbon />
        <div className="flex">
            <main className="min-w-0 flex-1">
                <FormulaBar />
                <Grid />
                <SheetBar />
            </main>
            <SidePanel />
        </div>
        <StatusBar />
        <Annotations />
        {/* input method indicator */}
        <div className="absolute left-[1187px] top-[953px] z-30 flex h-[26px] w-[62px] items-center justify-center gap-[3px] rounded-md border border-[#8a8a8a] bg-white text-[13px] text-[#333] shadow">
            CH
            <Icon d="M5 1c3 3 2 7-4 8c6 3 10 1 9-4c0-3-2-4-5-4z" w={12} />
            简
        </div>
        <div className="pointer-events-none absolute left-[1451px] top-[990px] z-30 whitespace-nowrap opacity-80">
            <div className="text-[21px] font-bold leading-[26px] text-[#5293da]">极光下载站</div>
            <div className="font-['Liberation_Sans',sans-serif] text-[15px] font-bold leading-[18px] text-[#55c76e]">www.xz7.com</div>
        </div>
    </div>
);

export default App;
